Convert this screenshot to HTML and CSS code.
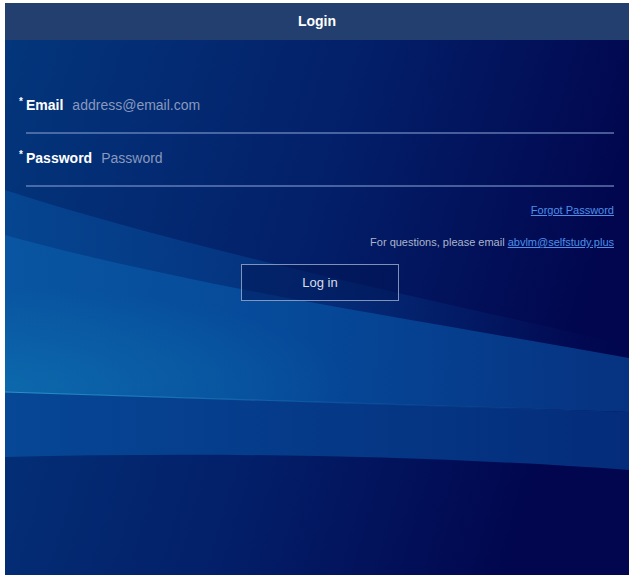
FILE: index.html
```html
<!DOCTYPE html>
<html lang="en">
<head>
<meta charset="utf-8">
<title>Login</title>
<link rel="stylesheet" href="styles.css">
</head>
<body>
<div class="frame">
  <header class="topbar">Login</header>
  <main class="panel">
    <form class="login">
      <label class="field">
        <span class="label"><span class="req">*</span>Email</span>
        <input type="email" placeholder="address@email.com">
      </label>
      <label class="field">
        <span class="label"><span class="req">*</span>Password</span>
        <input type="password" placeholder="Password">
      </label>
      <a class="forgot" href="#">Forgot Password</a>
      <p class="contact">For questions, please email <a href="#">abvlm@selfstudy.plus</a></p>
      <button type="button" class="submit">Log in</button>
    </form>
  </main>
</div>
</body>
</html>
```

FILE: styles.css
```css
html, body {
  margin: 0;
  background: #fff;
}

body {
  padding: 3px 1px 3px 5px;
  font-family: "Liberation Sans", Arial, Helvetica, sans-serif;
}

.frame {
  height: 572px;
  display: flex;
  flex-direction: column;
}

.topbar {
  height: 37px;
  line-height: 37px;
  background: #223f70;
  color: #fff;
  text-align: center;
  font-size: 14px;
  font-weight: bold;
}

/* wavy blue backdrop of the sign-in panel */
.panel {
  flex: 1;
  background-color: #02246a;
  background-image: url("data:image/svg+xml,%3Csvg xmlns='http://www.w3.org/2000/svg' viewBox='0 0 624 535' preserveAspectRatio='none'%3E%3Cdefs%3E%3ClinearGradient id='b' x1='0' y1='0' x2='1' y2='0.25'%3E%3Cstop offset='0' stop-color='%2303367c'/%3E%3Cstop offset='0.55' stop-color='%23031f69'/%3E%3Cstop offset='1' stop-color='%2301064e'/%3E%3C/linearGradient%3E%3ClinearGradient id='w' x1='0' y1='0' x2='1' y2='0'%3E%3Cstop offset='0' stop-color='%23064894' stop-opacity='0.85'/%3E%3Cstop offset='0.5' stop-color='%23063f8e' stop-opacity='0.5'/%3E%3Cstop offset='1' stop-color='%23052a78' stop-opacity='0'/%3E%3C/linearGradient%3E%3ClinearGradient id='l' x1='0' y1='0' x2='1' y2='0'%3E%3Cstop offset='0' stop-color='%230958a4'/%3E%3Cstop offset='0.45' stop-color='%23064e9f'/%3E%3Cstop offset='1' stop-color='%23073a8a'/%3E%3C/linearGradient%3E%3ClinearGradient id='m' x1='0' y1='0' x2='1' y2='0'%3E%3Cstop offset='0' stop-color='%23064796'/%3E%3Cstop offset='1' stop-color='%23042c7a'/%3E%3C/linearGradient%3E%3ClinearGradient id='s' x1='0' y1='0' x2='1' y2='0'%3E%3Cstop offset='0' stop-color='%2330a0d0' stop-opacity='0.85'/%3E%3Cstop offset='0.6' stop-color='%231a7cc0' stop-opacity='0.3'/%3E%3Cstop offset='1' stop-color='%231a6ab0' stop-opacity='0'/%3E%3C/linearGradient%3E%3CradialGradient id='c' cx='0' cy='0.85' r='0.55'%3E%3Cstop offset='0' stop-color='%230f74b2' stop-opacity='0.6'/%3E%3Cstop offset='1' stop-color='%230f74b2' stop-opacity='0'/%3E%3C/radialGradient%3E%3C/defs%3E%3Crect width='624' height='535' fill='url(%23b)'/%3E%3Cpath d='M0,150 C170,205 380,250 624,305 L624,372 L0,352 Z' fill='url(%23w)'/%3E%3Cpath d='M0,195 C180,245 400,278 624,318 L624,372 L0,352 Z' fill='url(%23l)' fill-opacity='0.85'/%3E%3Cpath d='M0,195 C180,245 400,278 624,318 L624,372 L0,352 Z' fill='url(%23c)'/%3E%3Cpath d='M0,352 L624,372 L624,430 C420,415 200,412 0,417 Z' fill='url(%23m)'/%3E%3Cpath d='M0,352 L624,372' stroke='url(%23s)' stroke-width='1.2' fill='none'/%3E%3C/svg%3E");
  background-size: 100% 100%;
  background-repeat: no-repeat;
}

.login {
  display: flex;
  flex-direction: column;
  padding: 55px 15px 0 21px;
  margin: 0;
}

.field {
  display: flex;
  align-items: center;
  height: 20px;
  padding-bottom: 17px;
  border-bottom: 2px solid rgba(130, 155, 205, 0.55);
}

.field + .field {
  margin-top: 14px;
}

.label {
  color: #fff;
  font-weight: bold;
  font-size: 14px;
  margin-right: 9px;
  white-space: nowrap;
}

.req {
  display: inline-block;
  width: 7px;
  margin-left: -7px;
  font-size: 10px;
  line-height: 10px;
  vertical-align: top;
}

.field input {
  flex: 1;
  min-width: 0;
  background: transparent;
  border: 0;
  outline: 0;
  padding: 0;
  font: 14px "Liberation Sans", Arial, sans-serif;
  color: #fff;
}

.field input::placeholder {
  color: #8899bf;
}

.forgot {
  align-self: flex-end;
  margin-top: 16px;
  font-size: 11px;
  line-height: 14px;
  color: #4d8fea;
}

.contact {
  margin: 18px 0 0;
  text-align: right;
  font-size: 11px;
  line-height: 14px;
  color: #aab5cc;
}

.contact a {
  color: #4d8fea;
}

.submit {
  align-self: center;
  margin-top: 15px;
  width: 158px;
  height: 37px;
  border: 1px solid rgba(170, 185, 215, 0.75);
  background: rgba(2, 22, 85, 0.55);
  color: #d8dde8;
  font: 13px "Liberation Sans", Arial, sans-serif;
  cursor: pointer;
}
```
